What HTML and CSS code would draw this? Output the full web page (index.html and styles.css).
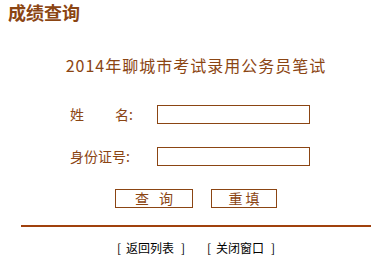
FILE: index.html
```html
<!DOCTYPE html>
<html>
<head>
<meta charset="utf-8">
<title>成绩查询</title>
<link rel="stylesheet" href="styles.css">
</head>
<body>
<div class="title">成绩查询</div>
<div class="main">
  <div class="subtitle">2014年聊城市考试录用公务员笔试</div>
  <form class="form">
    <div class="row">
      <label class="label"><span class="gap-name">姓</span>名:</label>
      <input class="field" type="text">
    </div>
    <div class="row">
      <label class="label">身份证号:</label>
      <input class="field" type="text">
    </div>
    <div class="buttons">
      <button type="button" class="btn btn-query"><span class="gap-q">查</span>询</button>
      <button type="button" class="btn btn-reset"><span class="gap-r">重</span>填</button>
    </div>
  </form>
  <div class="rule"></div>
  <div class="links">
    <span class="group"><span class="br">[</span><a href="#" class="link">返回列表</a><span class="br br-r">]</span></span>
    <span class="group"><span class="br">[</span><a href="#" class="link">关闭窗口</a><span class="br br-r">]</span></span>
  </div>
</div>
</body>
</html>
```
FILE: styles.css
```css
html, body {
  margin: 0;
  padding: 0;
  background: #ffffff;
}
body {
  font-family: "Noto Sans CJK SC", "Noto Sans", sans-serif;
  color: #8b4513;
}
.title {
  height: 24px;
  line-height: 24px;
  padding-left: 8px;
  font-size: 18px;
  font-weight: bold;
  color: #8b4513;
}
.main {
  width: 350px;
  margin-left: 21px;
}
.subtitle {
  margin-top: 31px;
  line-height: 20px;
  height: 20px;
  font-size: 16px;
  letter-spacing: 1px;
  text-align: center;
}
.form {
  margin: 30px 0 0 0;
  padding: 0;
}
.row {
  display: flex;
  align-items: center;
  height: 19px;
  padding-left: 49px;
  margin-bottom: 23px;
}
.row:last-of-type {
  margin-bottom: 0;
}
.label {
  width: 87px;
  font-size: 14px;
  line-height: 19px;
  white-space: nowrap;
}
.gap-name {
  margin-right: 31px;
}
.field {
  box-sizing: border-box;
  width: 153px;
  height: 19px;
  margin: 0;
  padding: 0 2px;
  border: 1px solid #8b4513;
  background: #ffffff;
  outline: none;
}
.buttons {
  display: flex;
  justify-content: center;
  gap: 18px;
  margin-top: 21px;
  height: 19px;
}
.btn {
  box-sizing: border-box;
  height: 19px;
  margin: 0;
  padding: 0;
  border: 1px solid #8b4513;
  background: #ffffff;
  color: #8b4513;
  font-family: "Noto Sans CJK SC", sans-serif;
  font-size: 14px;
  line-height: 17px;
}
.btn-query {
  width: 78px;
}
.btn-reset {
  width: 66px;
}
.gap-q {
  margin-right: 10px;
}
.gap-r {
  margin-right: 3px;
}
.rule {
  margin-top: 17px;
  height: 2px;
  background: #a0410d;
}
.links {
  margin-top: 13px;
  display: flex;
  justify-content: center;
  gap: 20px;
  font-size: 12px;
  line-height: 16px;
  color: #000000;
}
.group {
  display: flex;
}
.br {
  width: 6px;
  margin-right: 4px;
  text-align: center;
}
.br-r {
  margin-left: 6px;
  margin-right: 0;
}
.link {
  color: #000000;
  text-decoration: none;
}
```
